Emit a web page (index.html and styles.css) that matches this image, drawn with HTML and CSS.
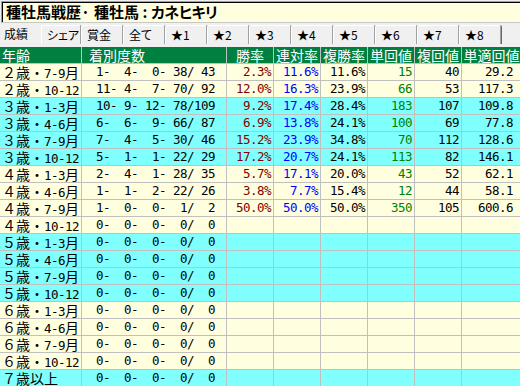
FILE: index.html
```html
<!DOCTYPE html>
<html lang="ja">
<head>
<meta charset="utf-8">
<title>種牡馬戦歴</title>
<link rel="stylesheet" href="styles.css">
</head>
<body>
<div class="title">種牡馬戦歴<span class="dot">·</span>種牡馬<span class="colon">:</span><span class="kana">カネヒキリ</span></div>
<div class="tabs">
  <div class="tab sel">成績</div>
  <div class="tab w40">シェア</div>
  <div class="tab">賞金</div>
  <div class="tab">全て</div>
  <div class="tab">★1</div>
  <div class="tab">★2</div>
  <div class="tab">★3</div>
  <div class="tab">★4</div>
  <div class="tab">★5</div>
  <div class="tab">★6</div>
  <div class="tab">★7</div>
  <div class="tab">★8</div>
</div>
<div class="grid">
  <div class="row hd">
    <div class="lbl">年齢</div><div class="cnth">着別度数</div><div class="c">勝率</div><div class="c">連対率</div><div class="c">複勝率</div><div class="c">単回値</div><div class="c">複回値</div><div class="c">単適回値</div>
  </div>
  <div class="row cream">
    <div class="lbl">２歳・<span class="m">7-9</span>月</div><div class="m cnt">1-  4-  0- 38/ 43</div><div class="m v r">2.3%</div><div class="m v b">11.6%</div><div class="m v">11.6%</div><div class="m v g">15</div><div class="m v">40</div><div class="m v last">29.2</div>
  </div>
  <div class="row cream">
    <div class="lbl">２歳・<span class="m">10-12</span></div><div class="m cnt">11- 4-  7- 70/ 92</div><div class="m v r">12.0%</div><div class="m v b">16.3%</div><div class="m v">23.9%</div><div class="m v g">66</div><div class="m v">53</div><div class="m v last">117.3</div>
  </div>
  <div class="row cyan">
    <div class="lbl">３歳・<span class="m">1-3</span>月</div><div class="m cnt">10- 9- 12- 78/109</div><div class="m v r">9.2%</div><div class="m v b">17.4%</div><div class="m v">28.4%</div><div class="m v g">183</div><div class="m v">107</div><div class="m v last">109.8</div>
  </div>
  <div class="row cyan">
    <div class="lbl">３歳・<span class="m">4-6</span>月</div><div class="m cnt">6-  6-  9- 66/ 87</div><div class="m v r">6.9%</div><div class="m v b">13.8%</div><div class="m v">24.1%</div><div class="m v g">100</div><div class="m v">69</div><div class="m v last">77.8</div>
  </div>
  <div class="row cyan">
    <div class="lbl">３歳・<span class="m">7-9</span>月</div><div class="m cnt">7-  4-  5- 30/ 46</div><div class="m v r">15.2%</div><div class="m v b">23.9%</div><div class="m v">34.8%</div><div class="m v g">70</div><div class="m v">112</div><div class="m v last">128.6</div>
  </div>
  <div class="row cyan">
    <div class="lbl">３歳・<span class="m">10-12</span></div><div class="m cnt">5-  1-  1- 22/ 29</div><div class="m v r">17.2%</div><div class="m v b">20.7%</div><div class="m v">24.1%</div><div class="m v g">113</div><div class="m v">82</div><div class="m v last">146.1</div>
  </div>
  <div class="row cream">
    <div class="lbl">４歳・<span class="m">1-3</span>月</div><div class="m cnt">2-  4-  1- 28/ 35</div><div class="m v r">5.7%</div><div class="m v b">17.1%</div><div class="m v">20.0%</div><div class="m v g">43</div><div class="m v">52</div><div class="m v last">62.1</div>
  </div>
  <div class="row cream">
    <div class="lbl">４歳・<span class="m">4-6</span>月</div><div class="m cnt">1-  1-  2- 22/ 26</div><div class="m v r">3.8%</div><div class="m v b">7.7%</div><div class="m v">15.4%</div><div class="m v g">12</div><div class="m v">44</div><div class="m v last">58.1</div>
  </div>
  <div class="row cream">
    <div class="lbl">４歳・<span class="m">7-9</span>月</div><div class="m cnt">1-  0-  0-  1/  2</div><div class="m v r">50.0%</div><div class="m v b">50.0%</div><div class="m v">50.0%</div><div class="m v g">350</div><div class="m v">105</div><div class="m v last">600.6</div>
  </div>
  <div class="row cream">
    <div class="lbl">４歳・<span class="m">10-12</span></div><div class="m cnt">0-  0-  0-  0/  0</div><div></div><div></div><div></div><div></div><div></div><div></div>
  </div>
  <div class="row cyan">
    <div class="lbl">５歳・<span class="m">1-3</span>月</div><div class="m cnt">0-  0-  0-  0/  0</div><div></div><div></div><div></div><div></div><div></div><div></div>
  </div>
  <div class="row cyan">
    <div class="lbl">５歳・<span class="m">4-6</span>月</div><div class="m cnt">0-  0-  0-  0/  0</div><div></div><div></div><div></div><div></div><div></div><div></div>
  </div>
  <div class="row cyan">
    <div class="lbl">５歳・<span class="m">7-9</span>月</div><div class="m cnt">0-  0-  0-  0/  0</div><div></div><div></div><div></div><div></div><div></div><div></div>
  </div>
  <div class="row cyan">
    <div class="lbl">５歳・<span class="m">10-12</span></div><div class="m cnt">0-  0-  0-  0/  0</div><div></div><div></div><div></div><div></div><div></div><div></div>
  </div>
  <div class="row cream">
    <div class="lbl">６歳・<span class="m">1-3</span>月</div><div class="m cnt">0-  0-  0-  0/  0</div><div></div><div></div><div></div><div></div><div></div><div></div>
  </div>
  <div class="row cream">
    <div class="lbl">６歳・<span class="m">4-6</span>月</div><div class="m cnt">0-  0-  0-  0/  0</div><div></div><div></div><div></div><div></div><div></div><div></div>
  </div>
  <div class="row cream">
    <div class="lbl">６歳・<span class="m">7-9</span>月</div><div class="m cnt">0-  0-  0-  0/  0</div><div></div><div></div><div></div><div></div><div></div><div></div>
  </div>
  <div class="row cream">
    <div class="lbl">６歳・<span class="m">10-12</span></div><div class="m cnt">0-  0-  0-  0/  0</div><div></div><div></div><div></div><div></div><div></div><div></div>
  </div>
  <div class="row cyan">
    <div class="lbl">７歳以上</div><div class="m cnt">0-  0-  0-  0/  0</div><div></div><div></div><div></div><div></div><div></div><div></div>
  </div>
</div>
</body>
</html>
```

FILE: styles.css
```css
* { box-sizing: border-box; }
html, body { margin: 0; padding: 0; }
body {
  width: 520px;
  height: 386px;
  overflow: hidden;
  background: #f0f0f0;
  font-family: "Noto Sans CJK JP", sans-serif;
  color: #000;
}
.title {
  margin: 1px 0 0 1px;
  width: 530px;
  height: 22px;
  background: #ffffe0;
  border-top: 1px solid #a0a0a0;
  border-left: 1px solid #a0a0a0;
  border-bottom: 1px solid #c8c8c8;
  box-shadow: inset 1px 1px 0 #000;
  padding-left: 4px;
  font-size: 15px;
  font-weight: bold;
  line-height: 19px;
  white-space: nowrap;
}
.title .dot {
  display: inline-block;
  width: 13px;
  text-align: left;
}
.title .colon {
  display: inline-block;
  width: 12px;
  text-align: center;
}
.title .kana {
  font-feature-settings: "palt";
  letter-spacing: -0.5px;
}
.tabs {
  display: flex;
  margin: 2px 0 3px 0;
  height: 19px;
}
.tab {
  flex: none;
  width: 42px;
  height: 19px;
  padding-left: 5px;
  font-size: 12px;
  line-height: 18px;
  white-space: nowrap;
  font-feature-settings: "palt";
  border-top: 1px solid #fff;
  border-left: 1px solid #fff;
  border-right: 1px solid #a0a0a0;
  box-shadow: 1px 0 0 #696969;
  border-radius: 2px 2px 0 0;
}
.tab.sel {
  width: 41px;
  padding-left: 4px;
  border: none;
  box-shadow: none;
}
.tab.w40 { width: 40px; }
.grid { width: 522px; }
.row {
  display: grid;
  grid-template-columns: 82px 145px 47px 47px 47px 47px 47px 60px;
  height: 17px;
}
.row > div {
  height: 17px;
  border-right: 1px solid #c0c0c0;
  border-bottom: 1px solid #c0c0c0;
  line-height: 16px;
  white-space: pre;
  font-size: 14px;
}
.hd > div { background: #008040; color: #fff; }
.cream > div { background: #ffffe0; }
.cyan > div { background: #80ffff; }
.lbl { padding-left: 2px; }
.cnth { padding-left: 7px; }
.c { text-align: center; }
.row > .m, .m {
  font-family: "DejaVu Sans Mono", monospace;
  font-size: 12.5px;
  letter-spacing: -0.525px;
}
.cnt { padding-left: 14px; }
.v { text-align: right; padding-right: 2px; }
.v.last { padding-right: 8px; }
.r { color: #800000; }
.b { color: #0000ff; }
.g { color: #008000; }
```
